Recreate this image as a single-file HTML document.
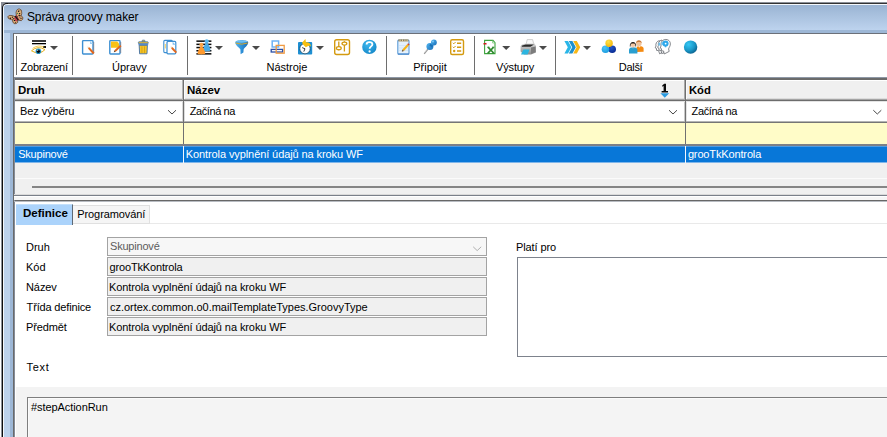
<!DOCTYPE html>
<html>
<head>
<meta charset="utf-8">
<title>Správa groovy maker</title>
<style>
*{box-sizing:border-box;margin:0;padding:0}
html,body{width:887px;height:437px;overflow:hidden;background:#fff}
body{font-family:"Liberation Sans",sans-serif;font-size:11px;color:#000;position:relative}
.a{position:absolute}
.t{position:absolute;white-space:pre;line-height:13px;height:13px;font-size:11px}
.b{font-weight:bold;transform-origin:0 0}
.w{color:#fff}
.sep{position:absolute;width:1px;top:36px;height:39px;background:#6e6e6e}
.hl{position:absolute;height:1px}
.vl{position:absolute;width:1px}
.inp{position:absolute;left:107px;width:380px;height:19px;background:#f0f0f0;border:1px solid #a3a3a3}
.ico{position:absolute}
.arr{position:absolute;width:0;height:0;border-left:4px solid transparent;border-right:4px solid transparent;border-top:4px solid #4d4d4d}
</style>
</head>
<body>
<!-- window frame -->
<div class="a" style="left:1px;top:2px;width:900px;height:450px;background:#8b9098"></div>
<div class="a" style="left:2px;top:3px;width:900px;height:450px;background:#0e0e0e;border-radius:5px 0 0 0"></div>
<div class="a" style="left:8px;top:3px;width:900px;height:1px;background:#333"></div>
<div class="a" style="left:3px;top:4px;width:900px;height:450px;background:#f4f8fc;border-radius:4px 0 0 0"></div>
<div class="a" id="frame" style="left:4px;top:5px;width:900px;height:450px;border-radius:3px 0 0 0;background:#bcd2ec"></div>
<div class="a" id="titlegrad" style="left:4px;top:5px;width:900px;height:25px;border-radius:3px 0 0 0;background:linear-gradient(#9ab4d3 0px,#bdd3ee 25px)"></div>
<div class="a" style="left:4px;top:30px;width:900px;height:3px;background:#9db7d6"></div>
<div class="a" style="left:10px;top:30px;width:3px;height:420px;background:#9db7d6"></div>
<div class="a" id="client" style="left:13px;top:33px;width:900px;height:420px;background:#fff;border-left:1px solid #6a6a6a;border-top:1px solid #6b7079"></div>

<!-- title -->
<div class="t" id="title" style="left:27px;top:10px;font-size:12px;line-height:14px;height:14px;letter-spacing:-0.14px">Správa groovy maker</div>

<!-- toolbar -->
<div class="sep" style="left:16px"></div>
<div class="sep" style="left:72px"></div>
<div class="sep" style="left:187px"></div>
<div class="sep" style="left:386px"></div>
<div class="sep" style="left:474px"></div>
<div class="sep" style="left:555px"></div>

<div class="t" style="left:20.6px;top:61px;letter-spacing:-0.27px">Zobrazení</div>
<div class="t" style="left:112px;top:61px;letter-spacing:0px">Úpravy</div>
<div class="t" style="left:266.5px;top:61px;letter-spacing:-0.03px">Nástroje</div>
<div class="t" style="left:413.2px;top:61px;letter-spacing:0px">Připojit</div>
<div class="t" style="left:496px;top:61px;letter-spacing:-0.15px">Výstupy</div>
<div class="t" style="left:618.8px;top:61px;letter-spacing:-0.3px">Další</div>

<!-- ICONS -->
<!--ICONS-START-->
<svg class="a" style="left:0;top:0" width="887" height="80" viewBox="0 0 887 80">
<defs>
<linearGradient id="gB" x1="0" y1="0" x2="1" y2="1"><stop offset="0" stop-color="#4fb4f0"/><stop offset="1" stop-color="#1a6fb8"/></linearGradient>
<radialGradient id="gS" cx="0.35" cy="0.3" r="0.75"><stop offset="0" stop-color="#35c8f5"/><stop offset="0.6" stop-color="#1a98c8"/><stop offset="1" stop-color="#0a5f8c"/></radialGradient>
<radialGradient id="gH" cx="0.4" cy="0.3" r="0.8"><stop offset="0" stop-color="#3db8ee"/><stop offset="1" stop-color="#1184c6"/></radialGradient>
<radialGradient id="gY" cx="0.4" cy="0.3" r="0.8"><stop offset="0" stop-color="#ffe24a"/><stop offset="1" stop-color="#f0b000"/></radialGradient>
<radialGradient id="gL" cx="0.4" cy="0.3" r="0.8"><stop offset="0" stop-color="#4cc6f8"/><stop offset="1" stop-color="#1496dc"/></radialGradient>
<radialGradient id="gD" cx="0.4" cy="0.3" r="0.8"><stop offset="0" stop-color="#1f55c8"/><stop offset="1" stop-color="#06258a"/></radialGradient>
<linearGradient id="gF" x1="0" y1="0" x2="1" y2="0"><stop offset="0" stop-color="#56b4ee"/><stop offset="0.5" stop-color="#2d90d8"/><stop offset="1" stop-color="#1a6cb4"/></linearGradient>
<linearGradient id="gP" x1="0" y1="0" x2="0" y2="1"><stop offset="0" stop-color="#d8d8d8"/><stop offset="1" stop-color="#8a8a8a"/></linearGradient>
</defs>

<!-- butterfly (title icon) -->
<g>
 <ellipse cx="18.9" cy="13" rx="2.9" ry="4.1" transform="rotate(8 18.9 13)" fill="#dcae78" stroke="#5a4030" stroke-width="0.7"/>
 <ellipse cx="20" cy="18" rx="3" ry="2.5" transform="rotate(25 20 18)" fill="#d4a474" stroke="#5a4030" stroke-width="0.7"/>
 <ellipse cx="11.8" cy="17.6" rx="4.1" ry="2.1" transform="rotate(12 11.8 17.6)" fill="#dcae78" stroke="#5a4030" stroke-width="0.7"/>
 <ellipse cx="15.2" cy="21" rx="2.6" ry="2.8" transform="rotate(-20 15.2 21)" fill="#d8a874" stroke="#5a4030" stroke-width="0.7"/>
 <path d="M16.2,14.4 L17.4,17.2 L19.4,19.6 L18,20 L16,17.6 Z" fill="#c8203c"/>
 <path d="M14,17.2 L16,18 L17.2,21 L15.8,21.6 Z" fill="#d03050"/>
 <path d="M15.2,16 L18.4,20.4" stroke="#1e1a18" stroke-width="1.4"/>
 <circle cx="18.6" cy="11.2" r="0.75" fill="#111"/><circle cx="19.6" cy="13.6" r="0.7" fill="#111"/><circle cx="19.4" cy="15.4" r="0.55" fill="#222"/>
 <circle cx="17.5" cy="13.3" r="0.6" fill="#2e8a50"/>
 <circle cx="10.4" cy="18.2" r="0.75" fill="#111"/><circle cx="12.4" cy="17.2" r="0.65" fill="#111"/>
 <circle cx="14.6" cy="20.4" r="0.7" fill="#111"/><circle cx="15.4" cy="22.4" r="0.5" fill="#222"/>
 <circle cx="21" cy="18.4" r="0.6" fill="#222"/><circle cx="19.8" cy="17" r="0.5" fill="#222"/><circle cx="13.4" cy="18.6" r="0.5" fill="#222"/><circle cx="8.8" cy="17" r="0.45" fill="#333"/><circle cx="20" cy="10.4" r="0.45" fill="#333"/>
</g>

<!-- eye / view -->
<rect x="32" y="40" width="14" height="2" fill="#3a3a3a"/>
<rect x="32" y="43" width="14" height="1.3" fill="#000"/>
<rect x="43" y="46" width="3" height="2" fill="#111"/>
<path d="M31.5,50.8 Q37.6,45.2 45,49.6 Q39.4,55.6 31.5,50.8 Z" fill="#fff" stroke="#e6ad10" stroke-width="0.95"/>
<path d="M32.6,48.4 Q38,44.4 44.2,47.2" fill="none" stroke="#f2c640" stroke-width="0.9"/>
<circle cx="38.4" cy="51.3" r="2.8" fill="#1f8fc0"/>
<circle cx="38.4" cy="51.3" r="1.6" fill="#05080c"/>
<circle cx="37.7" cy="50.3" r="0.55" fill="#fff"/>

<!-- new doc -->
<rect x="82.6" y="40.6" width="10.4" height="13.4" rx="0.7" fill="#fff" stroke="#3c8fd2" stroke-width="1.4"/>
<path d="M90,41 L93,44 L90,44 Z" fill="#9fd0f4"/>
<rect x="93.4" y="42" width="0.8" height="11" fill="#6a5a5a" opacity="0.6"/>
<path d="M89.44,47.23 L94.54,52.83 L93.06,54.17 L87.96,48.57 Z" fill="#e2671c"/>
<path d="M87.5,46.6 L89.44,47.23 L87.96,48.57 Z" fill="#e8c9a0"/>

<!-- edit doc -->
<rect x="109.8" y="40.6" width="10.2" height="13.4" rx="0.7" fill="#fff" stroke="#3c8fd2" stroke-width="1.4"/>
<rect x="120.4" y="42" width="0.8" height="11" fill="#6a5a5a" opacity="0.6"/>
<path d="M111,41.6 H117.2 L119,43.6 V47.8 H111 Z" fill="#f9c116"/>
<path d="M120.1,44.9 L121.5,46.3 L115.8,51.7 L114.4,50.24 Z" fill="#e2671c"/>
<path d="M113.8,52.2 L115.8,51.7 L114.4,50.24 Z" fill="#5a4630"/>

<!-- trash -->
<rect x="142" y="40.2" width="3" height="2" rx="0.8" fill="#f6c324" stroke="#3f6fa8" stroke-width="0.8"/>
<rect x="138.4" y="41.8" width="9.8" height="1.9" rx="0.6" fill="#f6c324" stroke="#3f6fa8" stroke-width="0.8"/>
<rect x="138.4" y="43.6" width="9.8" height="1.7" fill="#5b90d4"/>
<path d="M139.2,45.3 H147.4 L147,53.8 H139.6 Z" fill="#f6c324" stroke="#3f6fa8" stroke-width="0.9"/>
<rect x="141.6" y="46.4" width="0.7" height="6.6" fill="#c79a12"/>
<rect x="144.2" y="46.4" width="0.7" height="6.6" fill="#c79a12"/>

<!-- copy doc -->
<rect x="163.8" y="40.4" width="8.6" height="12.2" rx="1" fill="#fff" stroke="#3c8fd2" stroke-width="1.1"/>
<rect x="164.8" y="44" width="1" height="4.4" fill="#f4d060"/>
<rect x="167" y="41.4" width="8.8" height="12.4" rx="1" fill="#fff" stroke="#3c8fd2" stroke-width="1.2"/>
<path d="M172.6,41.8 L175.6,44.8 L172.6,44.8 Z" fill="#7fc0f0"/>
<path d="M172.5,47.1 L177,52 L175.6,53.3 L171.1,48.4 Z" fill="#e2671c"/>
<path d="M170.6,46.4 L172.5,47.1 L171.1,48.4 Z" fill="#e8c9a0"/>

<!-- people list -->
<g fill="#0a0a0a">
<rect x="196.4" y="40.4" width="15" height="1.5"/><rect x="196.4" y="43.6" width="15" height="1.5"/><rect x="196.4" y="46.8" width="15" height="1.5"/><rect x="196.4" y="50" width="15" height="1.5"/><rect x="196.4" y="53.1" width="15" height="1.5"/>
</g>
<circle cx="206.7" cy="41.2" r="2" fill="#5ab8ee"/>
<path d="M206.7,42.4 C208.4,43 210.6,48.6 210.4,50.6 C210.2,51.6 203.2,51.6 203,50.6 C202.8,48.6 205,43 206.7,42.4 Z" fill="#4aabe6"/>
<circle cx="201.4" cy="44.8" r="2" fill="#ffa648"/>
<path d="M201.4,46 C203.2,46.8 205.4,52 205.2,53.8 C205,54.6 197.8,54.6 197.6,53.8 C197.4,52 199.6,46.8 201.4,46 Z" fill="#ff9a2e"/>

<!-- funnel -->
<path d="M235.2,42.4 C235.2,39.6 248.2,39.6 248.2,42.4 C248.2,45.4 244.2,47.4 243.6,49.4 L243.4,52.4 L240.6,54.2 L240.4,49.4 C239.6,47.4 235.2,45.4 235.2,42.4 Z" fill="url(#gF)"/>
<path d="M235.6,43 Q241.7,45.4 247.8,43" fill="none" stroke="#e8a818" stroke-width="0.9"/>
<ellipse cx="241.7" cy="41.6" rx="5.6" ry="1.1" fill="#6cc0f4"/>

<!-- monitor / windows -->
<rect x="272.2" y="41" width="6.4" height="6" fill="#fff" stroke="#6cb2f6" stroke-width="1.5"/>
<rect x="271.2" y="49.4" width="11.4" height="2.6" fill="#fff" stroke="#2a4fa8" stroke-width="1.3"/>
<rect x="276.2" y="45.4" width="8" height="7.8" fill="none" stroke="#f09a42" stroke-width="1.3"/>

<!-- clock -->
<rect x="298" y="42" width="14.2" height="12.4" rx="1" fill="#1e8fd2"/>
<circle cx="305" cy="48.6" r="5.2" fill="#fff" stroke="#0c3a58" stroke-width="0.7"/>
<path d="M305,48.8 L302.2,47.6 M305,48.8 L303.8,51.6" stroke="#222" stroke-width="0.9" fill="none"/>
<path d="M305.4,39 L306,42.4 C308.4,42 310.8,43.6 311,46.6 L309,45.4 L305.8,47.2 L303,44.4 L302,42.8 Z" fill="#f9c010"/>

<!-- settings -->
<rect x="334.7" y="39.7" width="14.8" height="14.8" rx="2" fill="#fff" stroke="#d49a10" stroke-width="1.4"/>
<path d="M338.8,41.4 V47 M338.8,49.6 V50.6 M344.4,45 V51.6 M344.4,41.2 V42" stroke="#d49a10" stroke-width="1.3" fill="none"/>
<ellipse cx="338.8" cy="48.2" rx="2.4" ry="1.5" fill="#fff" stroke="#d49a10" stroke-width="1.3"/>
<ellipse cx="344.4" cy="43.6" rx="2.4" ry="1.5" fill="#fff" stroke="#d49a10" stroke-width="1.3"/>

<!-- help -->
<circle cx="369.4" cy="46.9" r="7.2" fill="url(#gH)"/>
<path d="M366.6,44.4 C366.6,41.4 372.4,41.4 372.4,44.4 C372.4,46.4 369.6,46.4 369.6,48.8" fill="none" stroke="#fff" stroke-width="1.8"/>
<circle cx="369.6" cy="51.4" r="1.1" fill="#fff"/>

<!-- notepad -->
<rect x="397.8" y="40" width="11.2" height="14.2" rx="1" fill="#e4f1fd" stroke="#5b9ad8" stroke-width="1.1"/>
<rect x="398.4" y="39.4" width="10" height="2" fill="#8a7a5a"/>
<rect x="399.6" y="39.4" width="1" height="2" fill="#e8d8a0"/><rect x="402" y="39.4" width="1" height="2" fill="#e8d8a0"/><rect x="404.4" y="39.4" width="1" height="2" fill="#e8d8a0"/><rect x="406.6" y="39.4" width="1" height="2" fill="#e8d8a0"/>
<path d="M399,45.6 H408 M399,48 H408 M399,50.4 H408" stroke="#c4dcf4" stroke-width="0.6"/>
<path d="M407.2,44.2 L408.8,45.6 L404,51 L402.4,49.6 Z" fill="#f5b416"/>
<path d="M407.2,44.2 L408.8,45.6 L409.6,44.6 L408.2,43.2 Z" fill="#d8402a"/>
<path d="M402.4,49.6 L404,51 L401.8,51.8 Z" fill="#6a5030"/>
<rect x="398" y="53.4" width="11" height="1.2" fill="#4a88cc"/>

<!-- pin -->
<path d="M428,49.2 L424.2,53.8" stroke="#9a9a9a" stroke-width="1.3"/>
<path d="M427.4,48.6 L424.8,52" stroke="#d8d8d8" stroke-width="0.6"/>
<circle cx="429.9" cy="46.6" r="3.5" fill="url(#gB)"/>
<path d="M430.6,43.6 L433.4,45.6 L432,47.4 L429.4,45.4 Z" fill="#1a72b8"/>
<circle cx="433.9" cy="42.5" r="2.9" fill="url(#gB)"/>
<circle cx="433" cy="41.6" r="1" fill="#8fd0f8" opacity="0.8"/>

<!-- checklist -->
<rect x="450.7" y="39.7" width="12.8" height="14.8" rx="1.5" fill="#fff" stroke="#d49a10" stroke-width="1.4"/>
<path d="M452.8,42.8 L453.8,43.8 L455.6,42 M452.8,46.8 L453.8,47.8 L455.6,46" stroke="#d49a10" stroke-width="1" fill="none"/>
<circle cx="454.2" cy="51" r="1.2" fill="#d49a10"/>
<path d="M457,43.2 H461.2 M457,47.2 H461.2 M457,51 H461.2" stroke="#d49a10" stroke-width="1.5"/>

<!-- excel -->
<path d="M484.6,40.4 H493 L495,42.6 V53.6 H484.6 Z" fill="#fff" stroke="#3da23d" stroke-width="1.1"/>
<path d="M492.6,40.6 V43 H495" fill="none" stroke="#7cc87c" stroke-width="0.8"/>
<rect x="483.4" y="43" width="3.2" height="1.6" rx="0.5" fill="#d01818"/>
<path d="M488,47.2 L493.6,53 M493.6,47.2 L488,53" stroke="#2e8a2e" stroke-width="1.7"/>
<path d="M487.2,47.2 H489.6 M492.2,47.2 H494.4 M487.2,53 H489.6 M492.2,53 H494.4" stroke="#2e8a2e" stroke-width="0.8"/>

<!-- printer -->
<path d="M527.2,39.6 H532.6 L534,45 H526 Z" fill="#fafafa" stroke="#b0b0b0" stroke-width="0.6"/>
<path d="M522,44.6 L525.4,43.4 H534.6 L536,46 V52.4 L531,54.6 H524 L520.6,51.4 V46.6 Z" fill="url(#gP)"/>
<path d="M521.6,45.8 L525.6,44.4 H534 L530.4,46.8 H522 Z" fill="#2a2a2a"/>
<path d="M531,47.6 L535.6,46.4 V52 L531,54 Z" fill="#7c7c7c"/>
<path d="M523.4,49.6 H529.6 L527.6,54.4 H521 Z" fill="#2bb5e0"/>

<!-- chevrons -->
<path d="M564.4,41 H568 L571.4,47.3 L568,53.6 H564.4 L567.8,47.3 Z" fill="#29b6e8"/>
<path d="M568.8,41 H572.4 L575.8,47.3 L572.4,53.6 H568.8 L572.2,47.3 Z" fill="#1e90d0"/>
<path d="M573.2,41 H576.8 L580.2,47.3 L576.8,53.6 H573.2 L576.6,47.3 Z" fill="#f9b818"/>

<!-- balls -->
<circle cx="612.2" cy="49.3" r="3.8" fill="url(#gD)"/>
<circle cx="605.5" cy="49.3" r="3.8" fill="url(#gL)"/>
<circle cx="609.1" cy="43.2" r="3.7" fill="url(#gY)"/>

<!-- people -->
<path d="M636.4,52 V48.6 C636.4,46.6 638,46 639.8,46 C641.8,46 643.6,46.8 643.6,48.8 V51.8 Z" fill="#f58a10"/>
<circle cx="638.9" cy="43.4" r="2.7" fill="#f2c49a"/>
<path d="M636,43.2 C636,39.2 641.8,39.2 641.8,43.2 C641,41.6 637,41.6 636,43.2 Z" fill="#c87a3a"/>
<path d="M638,46.2 L639.4,47.6 L640.8,46.2 Z" fill="#fff"/>
<path d="M629,53.6 V50 C629,47.8 631,47.2 633,47.2 C635,47.2 637.4,47.8 637.4,50 V53.6 Z" fill="#2a9fd0"/>
<circle cx="633" cy="44.6" r="2.5" fill="#f4c8a4"/>
<path d="M629.8,46.6 C629.2,40.6 636.8,40.6 636.2,46.6 L635.4,46.4 C635.6,43.2 634.4,43.4 633,43.4 C631.6,43.4 630.4,43.2 630.6,46.4 Z" fill="#1a1a1a"/>
<path d="M632,47.4 L633,48.6 L634,47.4 Z" fill="#f4c8a4"/>

<!-- heads -->
<g fill="#fff" stroke="#50545c" stroke-width="0.7">
<path d="M659.4,40.6 C656.6,41.2 655.4,43.8 656,46 L655.2,47.8 L656.4,48.4 L656.6,50.4 L658.6,50.6 L659.6,53.8 L663,52 L662.4,49 Z"/>
<path d="M662,40 C659,40.6 657.8,43.2 658.4,45.6 L657.6,47.4 L658.8,48 L659,50.2 L661,50.4 L661.8,53.6 L665.4,52 L664.6,48.6 Z"/>
<path d="M664.4,39.6 C668.4,38.8 671,41.6 670.2,45.2 C669.8,47 668.8,47.6 668.6,49 L669.2,51.4 L664.2,54 L663.6,51 L661.6,50.8 L661.4,48.6 L660.2,48 L661,46 C660.4,43.2 661.6,40.4 664.4,39.6 Z"/>
</g>
<path d="M658.4,43 L660,42.4 L660,45.6 L658.6,45.8 Z M661.2,42.4 L662.6,41.6 L662.8,45 L661.4,45.4 Z" fill="#6cc4f2"/>
<circle cx="665.5" cy="43.5" r="3.1" fill="#2fa8ea"/>
<circle cx="665.6" cy="43.6" r="0.9" fill="#fff"/>
<path d="M665.6,45.6 L664.8,47.2 L666.4,47.2 Z" fill="#2a9fe0"/>

<!-- sphere -->
<circle cx="690.6" cy="47.1" r="6.7" fill="url(#gS)"/>

<!-- dropdown arrows -->
<g fill="#4a4a4a">
<path d="M50,46 h8 l-4,4 z"/><path d="M215,46 h8 l-4,4 z"/><path d="M252,46 h8 l-4,4 z"/><path d="M316,46 h8 l-4,4 z"/><path d="M502.2,46 h8 l-4,4 z"/><path d="M539,46 h8 l-4,4 z"/><path d="M583,46 h8 l-4,4 z"/>
</g>
</svg>
<!--ICONS-END-->

<!-- grid -->
<div class="a" style="left:14px;top:77px;width:880px;height:1px;background:#8e98a6"></div>
<div class="a" style="left:14px;top:78px;width:880px;height:2px;background:#6b6b6b"></div>
<div class="a" style="left:14px;top:77px;width:1px;height:123px;background:#858c98"></div>
<div class="a" style="left:15px;top:80px;width:880px;height:1px;background:#fff"></div>
<div class="a" style="left:15px;top:81px;width:880px;height:18px;background:#f0f0f0"></div>
<div class="a" style="left:15px;top:98px;width:880px;height:1px;background:#dcdcdc"></div>
<div class="a" style="left:15px;top:99px;width:880px;height:1px;background:#a4a4a4"></div>
<div class="a" style="left:15px;top:100px;width:880px;height:1px;background:#6c6c6c"></div>
<div class="a" style="left:15px;top:101px;width:880px;height:1px;background:#e4e4e4"></div>
<div class="a" style="left:15px;top:102px;width:880px;height:19px;background:#fff"></div>
<div class="a" style="left:15px;top:121px;width:880px;height:1px;background:#b4b4b4"></div>
<div class="a" style="left:15px;top:122px;width:880px;height:1px;background:#757575"></div>
<div class="a" style="left:15px;top:123px;width:880px;height:21px;background:#fffcc8"></div>
<div class="a" style="left:15px;top:144px;width:880px;height:2px;background:#7c8088"></div>
<div class="a" style="left:15px;top:146px;width:880px;height:1px;background:#4f9be2"></div>
<div class="a" style="left:15px;top:147px;width:880px;height:15px;background:#0877d8"></div>
<div class="a" style="left:15px;top:162px;width:880px;height:1px;background:#7fb6ea"></div>
<div class="a" style="left:15px;top:163px;width:880px;height:32px;background:#f0f0f0"></div>
<div class="a" style="left:15px;top:178px;width:880px;height:1px;background:#fbfbfb"></div>
<div class="a" style="left:32px;top:186px;width:880px;height:2px;background:#858585"></div>
<div class="a" style="left:14px;top:194px;width:880px;height:1px;background:#dadada"></div>
<div class="a" style="left:14px;top:195px;width:880px;height:1px;background:#7a808a"></div>
<!-- column dividers -->
<div class="a" style="left:182px;top:80px;width:1px;height:20px;background:#b4b4b4"></div>
<div class="a" style="left:183px;top:80px;width:1px;height:64px;background:#707070"></div>
<div class="a" style="left:184px;top:80px;width:1px;height:19px;background:#fbfbfb"></div>
<div class="a" style="left:182px;top:102px;width:1px;height:19px;background:#d8d8d8"></div>
<div class="a" style="left:184px;top:102px;width:1px;height:19px;background:#dcdcdc"></div>
<div class="a" style="left:684px;top:80px;width:1px;height:20px;background:#a8a8a8"></div>
<div class="a" style="left:685px;top:80px;width:1px;height:64px;background:#707070"></div>
<div class="a" style="left:686px;top:80px;width:1px;height:19px;background:#fbfbfb"></div>
<div class="a" style="left:684px;top:102px;width:1px;height:19px;background:#c8c8c8"></div>
<div class="a" style="left:686px;top:102px;width:1px;height:19px;background:#e4e4e4"></div>
<div class="a" style="left:183px;top:146px;width:1px;height:17px;background:#f2f7fd"></div>
<div class="a" style="left:685px;top:146px;width:1px;height:17px;background:#f2f7fd"></div>

<div class="t b" style="left:18px;top:84px;transform:scaleX(1.045)">Druh</div>
<div class="t b" style="left:187.2px;top:84px;transform:scaleX(1.045)">Název</div>
<div class="t b" style="left:689.2px;top:84px;transform:scaleX(1.02)">Kód</div>
<div class="t" style="left:20px;top:105px;letter-spacing:-0.06px">Bez výběru</div>
<div class="t" style="left:189.8px;top:105px;letter-spacing:-0.42px">Začíná na</div>
<div class="t" style="left:691.6px;top:105px;letter-spacing:-0.4px">Začíná na</div>
<div class="t w" style="left:18.2px;top:148px;letter-spacing:-0.2px">Skupinové</div>
<div class="t w" style="left:185.7px;top:148px;letter-spacing:-0.09px">Kontrola vyplnění údajů na kroku WF</div>
<div class="t w" style="left:687.9px;top:148px;letter-spacing:-0.14px">grooTkKontrola</div>

<!-- sort indicator + combobox chevrons -->
<svg class="a" style="left:0;top:80px" width="887" height="180" viewBox="0 80 887 180">
<path d="M662.2,85.6 L664.2,83.8 H666 V91 H668 V92.4 H661.6 V91 H663.6 V86 L662.2,86.8 Z" fill="#0a0a0a"/>
<path d="M660.4,93.2 H669.2 L664.8,97.8 Z" fill="#2a9ae0"/>
<g fill="none" stroke="#484848" stroke-width="1">
<path d="M168,110.2 L172,114 L176,110.2"/>
<path d="M669,110.2 L673,114 L677,110.2"/>
<path d="M873.3,110.2 L877.3,114 L881.3,110.2"/>
</g>
</svg>

<!-- splitter + lower panel -->
<div class="a" style="left:14px;top:196px;width:880px;height:1px;background:#fff"></div>
<div class="a" style="left:14px;top:197px;width:880px;height:3px;background:#f6f6f6"></div>
<div class="a" style="left:14px;top:200px;width:880px;height:1px;background:#676767"></div>
<div class="a" style="left:14px;top:201px;width:880px;height:1px;background:#b8bcc2;z-index:1"></div>
<div class="a" style="left:14px;top:201px;width:880px;height:240px;background:#fff"></div>
<div class="a" style="left:14px;top:200px;width:1px;height:240px;background:#858c98"></div>

<!-- tabs -->
<div class="a" style="left:16px;top:223px;width:880px;height:1px;background:#e9e9e9"></div>
<div class="a" style="left:16px;top:204px;width:57px;height:21px;background:#abd3fb;border-right:1px solid #5f6a75;border-top:1px solid #c4e0fb"></div>
<div class="a" style="left:73px;top:205px;width:77px;height:19px;background:#f5f5f5;border:1px solid #e0e0e0;border-left:none"></div>
<div class="t b" style="left:22.8px;top:207px;transform:scaleX(1.05)">Definice</div>
<div class="t" style="left:77.3px;top:208px;letter-spacing:-0.1px">Programování</div>

<!-- form -->
<div class="t" style="left:26px;top:241px">Druh</div>
<div class="t" style="left:26px;top:261px">Kód</div>
<div class="t" style="left:26px;top:281px;letter-spacing:-0.08px">Název</div>
<div class="t" style="left:26.6px;top:301px;letter-spacing:-0.16px">Třída definice</div>
<div class="t" style="left:26px;top:321px;letter-spacing:-0.12px">Předmět</div>
<div class="inp" style="top:237px;background:#f7f7f7"></div>
<div class="inp" style="top:257px"></div>
<div class="inp" style="top:277px"></div>
<div class="inp" style="top:297px"></div>
<div class="inp" style="top:317px"></div>
<div class="t" style="left:110px;top:240px;color:#5c5c5c;letter-spacing:-0.2px">Skupinové</div>
<div class="t" style="left:109.6px;top:261px;letter-spacing:-0.16px">grooTkKontrola</div>
<div class="t" style="left:109px;top:281px;letter-spacing:-0.09px">Kontrola vyplnění údajů na kroku WF</div>
<div class="t" style="left:110px;top:301px;letter-spacing:-0.02px">cz.ortex.common.o0.mailTemplateTypes.GroovyType</div>
<div class="t" style="left:109px;top:321px;letter-spacing:-0.09px">Kontrola vyplnění údajů na kroku WF</div>

<svg class="a" style="left:470px;top:244px" width="14" height="9" viewBox="470 244 14 9"><path d="M473.2,246.8 L477.2,250.6 L481.2,246.8" fill="none" stroke="#b0b0b0" stroke-width="1"/></svg>
<div class="t" style="left:516px;top:241px;letter-spacing:-0.1px">Platí pro</div>
<div class="a" style="left:517px;top:257px;width:400px;height:100px;background:#fff;border:1px solid #7d828c"></div>

<div class="t" style="left:26.6px;top:361px;letter-spacing:0.65px">Text</div>
<div class="a" style="left:16px;top:387px;width:880px;height:60px;background:#f3f3f3"></div>
<div class="a" style="left:27px;top:397px;width:880px;height:60px;background:#f4f4f4;border:1px solid #7e7e7e;box-shadow:inset 1px 1px 0 #fbfbfb"></div>
<div class="t" style="left:31px;top:401px;letter-spacing:-0.07px">#stepActionRun</div>
</body>
</html>
